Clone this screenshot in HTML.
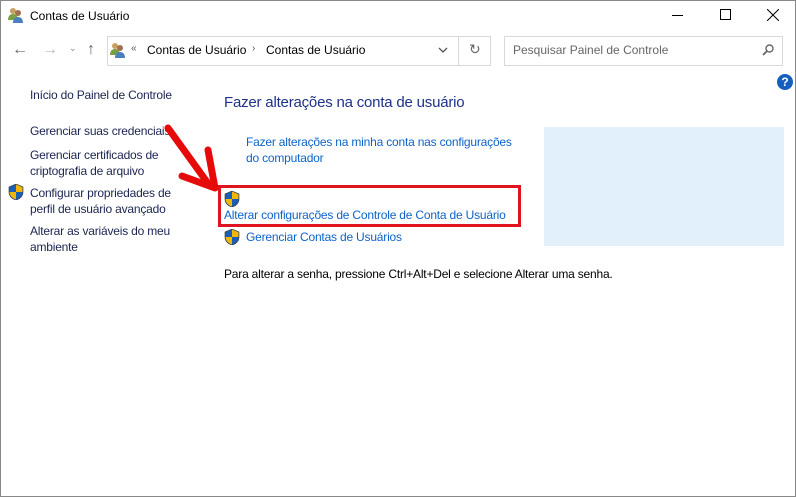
<!DOCTYPE html>
<html><head><meta charset="utf-8"><style>
*{margin:0;padding:0;box-sizing:border-box}
body{width:796px;height:497px;overflow:hidden;background:#fff;font-family:"Liberation Sans",sans-serif;font-size:12px;position:relative}
.a{position:absolute;white-space:nowrap}
.nav{color:#1a2550;letter-spacing:-0.2px}
.lnk{color:#0e63c9;letter-spacing:-0.2px}
</style></head><body>
<div class="a" style="left:0;top:0;width:796px;height:497px;border:1px solid #888"></div>
<svg class="a" style="left:8px;top:7px" width="16" height="16" viewBox="0 0 16 16"><circle cx="5" cy="4" r="3" fill="#c8a060"/><path d="M0 13c0-4 2-6 5-6s5 2 5 6z" fill="#7aa040"/><circle cx="10" cy="6" r="3" fill="#a07050"/><path d="M5 16c0-4 2-6 5-6s5 2 5 6z" fill="#4a80c0"/></svg>
<div class="a" style="left:30px;top:9px;color:#000">Contas de Usuário</div>
<div class="a" style="left:672px;top:15px;width:11px;border-top:1px solid #000"></div>
<div class="a" style="left:720px;top:9px;width:11px;height:11px;border:1px solid #000"></div>
<svg class="a" style="left:767px;top:9px" width="12" height="12"><path d="M0 0L12 12M12 0L0 12" stroke="#000"/></svg>
<div class="a" style="left:12px;top:41px;color:#666;font-size:16px">←</div>
<div class="a" style="left:42px;top:41px;color:#bbb;font-size:16px">→</div>
<div class="a" style="left:69px;top:43px;color:#888;font-size:9px">⌄</div>
<div class="a" style="left:87px;top:41px;color:#666;font-size:16px">↑</div>
<div class="a" style="left:107px;top:36px;width:384px;height:30px;border:1px solid #d9d9d9"></div>
<div class="a" style="left:458px;top:36px;width:1px;height:30px;background:#d9d9d9"></div>
<svg class="a" style="left:110px;top:42px" width="16" height="16" viewBox="0 0 16 16"><circle cx="5" cy="4" r="3" fill="#c8a060"/><path d="M0 13c0-4 2-6 5-6s5 2 5 6z" fill="#7aa040"/><circle cx="10" cy="6" r="3" fill="#a07050"/><path d="M5 16c0-4 2-6 5-6s5 2 5 6z" fill="#4a80c0"/></svg>
<div class="a" style="left:131px;top:43px;color:#555;font-size:10px">«</div>
<div class="a" style="left:147px;top:43px;color:#000">Contas de Usuário</div>
<div class="a" style="left:252px;top:43px;color:#555;font-size:10px">›</div>
<div class="a" style="left:266px;top:43px;color:#000">Contas de Usuário</div>
<svg class="a" style="left:438px;top:47px" width="10" height="6"><path d="M1 1L5 5L9 1" stroke="#555" fill="none" stroke-width="1.3"/></svg>
<div class="a" style="left:469px;top:41px;color:#666;font-size:14px">↻</div>
<div class="a" style="left:504px;top:36px;width:279px;height:30px;border:1px solid #d9d9d9"></div>
<div class="a" style="left:513px;top:43px;color:#666">Pesquisar Painel de Controle</div>
<svg class="a" style="left:762px;top:44px" width="12" height="12"><circle cx="7.5" cy="4.5" r="3.5" stroke="#666" fill="none" stroke-width="1.4"/><path d="M5 7L1 11" stroke="#666" stroke-width="1.8"/></svg>
<div class="a" style="left:777px;top:74px;width:16px;height:16px;border-radius:50%;background:#1560bd;color:#fff;font-weight:bold;text-align:center;line-height:16px;font-size:12px">?</div>
<div class="a nav" style="left:30px;top:88px">Início do Painel de Controle</div>
<div class="a nav" style="left:30px;top:124px">Gerenciar suas credenciais</div>
<div class="a nav" style="left:30px;top:147px;line-height:16px">Gerenciar certificados de<br>criptografia de arquivo</div>
<div class="a nav" style="left:30px;top:185px;line-height:16px">Configurar propriedades de<br>perfil de usuário avançado</div>
<div class="a nav" style="left:30px;top:223px;line-height:16px">Alterar as variáveis do meu<br>ambiente</div>
<div class="a" style="left:224px;top:94px;color:#1e3287;font-size:15px;letter-spacing:-0.2px">Fazer alterações na conta de usuário</div>
<div class="a lnk" style="left:246px;top:134px;line-height:16px">Fazer alterações na minha conta nas configurações<br>do computador</div>
<div class="a" style="left:544px;top:127px;width:240px;height:119px;background:#e2f0fc"></div>
<div class="a" style="left:218px;top:185px;width:303px;height:42px;border:3px solid #e0141e"></div>
<div class="a lnk" style="left:224px;top:208px">Alterar configurações de Controle de Conta de Usuário</div>
<div class="a lnk" style="left:246px;top:230px">Gerenciar Contas de Usuários</div>
<div class="a" style="left:224px;top:267px;color:#000;letter-spacing:-0.2px">Para alterar a senha, pressione Ctrl+Alt+Del e selecione Alterar uma senha.</div>
<svg width="0" height="0" style="position:absolute"><defs><g id="sh"><path d="M8 0L15 3V8C15 12 12 15 8 16C4 15 1 12 1 8V3Z" fill="#1a5fb4" stroke="#333" stroke-width="0.6"/><path d="M8 0.5L14.5 3.2V8H8Z" fill="#f2b705"/><path d="M8 8H1.5C1.8 12 4.5 14.6 8 15.5Z" fill="#f2b705"/></g></defs></svg>
<svg class="a" style="left:8px;top:184px" width="16" height="16"><use href="#sh"/></svg>
<svg class="a" style="left:224px;top:191px" width="16" height="16"><use href="#sh"/></svg>
<svg class="a" style="left:224px;top:229px" width="16" height="16"><use href="#sh"/></svg>
<svg class="a" style="left:160px;top:120px" width="64" height="74"><path d="M8 8L47 62" stroke="#e60a0a" stroke-width="7" stroke-linecap="round"/><path d="M22 56L55 68L48 30" stroke="#e60a0a" stroke-width="7" fill="none" stroke-linecap="round" stroke-linejoin="round"/></svg>
</body></html>
